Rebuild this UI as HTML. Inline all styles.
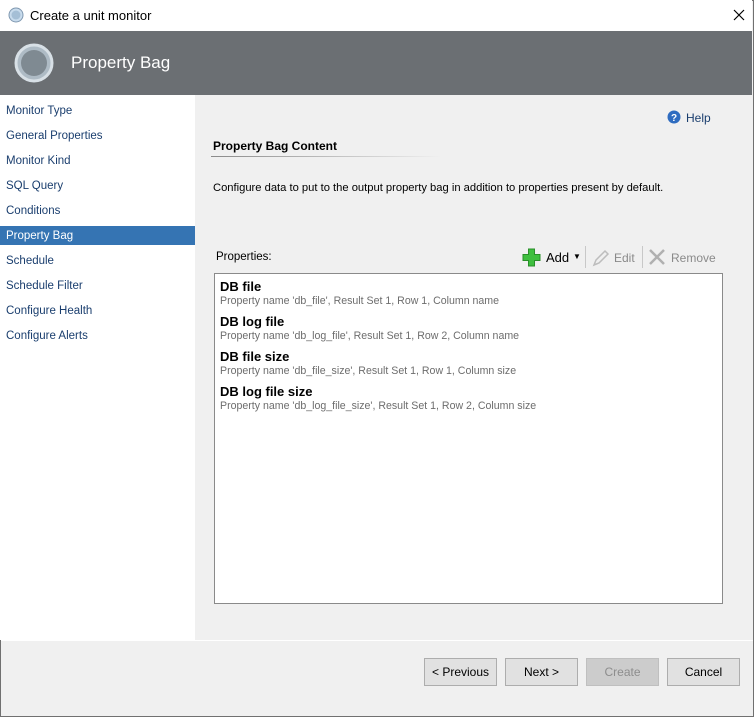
<!DOCTYPE html>
<html><head><style>
*{margin:0;padding:0;box-sizing:border-box}
body{width:754px;height:717px;overflow:hidden;font-family:"Liberation Sans",sans-serif;font-size:12px;background:#f0f0f0;position:relative}
.win{position:absolute;left:0;top:0;width:754px;height:717px;border:1px solid #707070}
.title{position:absolute;left:0;top:0;width:752px;height:31px;background:#fff}
.title span{position:absolute;left:30px;top:8px;font-size:13px;color:#000}
.hdr{position:absolute;left:0;top:31px;width:752px;height:64px;background:#6b6f73}
.hdr span{position:absolute;left:71px;top:22px;font-size:17px;color:#fff}
.nav{position:absolute;left:0;top:95px;width:195px;height:545px;background:#fff}
.nav div{position:absolute;left:0;width:195px;height:19px;padding-left:6px;line-height:21px;color:#1a3e6e;font-size:11.5px}
.nav .sel{background:#3574b3;color:#fff}
.abs{position:absolute}
.list{position:absolute;left:214px;top:273px;width:509px;height:331px;background:#fff;border:1px solid #8a8a8a}
.list b{position:absolute;left:5px;font-size:13px;color:#000}
.list i{position:absolute;left:5px;font-style:normal;font-size:10.6px;color:#6d6d6d}
.btn{position:absolute;top:658px;width:73px;height:28px;border:1px solid #adadad;background:#e1e1e1;text-align:center;line-height:26px;font-size:12px}
</style></head><body>
<div class="win"></div>
<div class="title"><svg class="abs" style="left:8px;top:7px" width="16" height="16"><circle cx="8" cy="8" r="7" fill="#c9dced" stroke="#7f98b0"/><circle cx="8" cy="8" r="4.5" fill="#a5bfd6"/></svg><span>Create a unit monitor</span>
<svg class="abs" style="left:733px;top:9px" width="12" height="12"><path d="M1 1L11 11M11 1L1 11" stroke="#000" stroke-width="1.2"/></svg></div>
<div class="hdr"><svg class="abs" style="left:14px;top:12px" width="40" height="40"><circle cx="20" cy="20" r="18" fill="#aebbc5" stroke="#d8e0e6" stroke-width="3"/><circle cx="20" cy="20" r="13" fill="#7f8a92"/></svg><span>Property Bag</span></div>
<div class="nav">
<div style="top:6px">Monitor Type</div>
<div style="top:31px">General Properties</div>
<div style="top:56px">Monitor Kind</div>
<div style="top:81px">SQL Query</div>
<div style="top:106px">Conditions</div>
<div class="sel" style="top:131px">Property Bag</div>
<div style="top:156px">Schedule</div>
<div style="top:181px">Schedule Filter</div>
<div style="top:206px">Configure Health</div>
<div style="top:231px">Configure Alerts</div>
</div>
<svg class="abs" style="left:667px;top:110px" width="14" height="14"><circle cx="7" cy="7" r="6.5" fill="#2f6cc0"/><text x="7" y="11" font-size="10" font-weight="bold" fill="#fff" text-anchor="middle" font-family="Liberation Sans">?</text></svg>
<div class="abs" style="left:686px;top:111px;font-size:12px;color:#1a3e6e">Help</div>
<div class="abs" style="left:213px;top:139px;font-size:12px;font-weight:bold">Property Bag Content</div>
<div class="abs" style="left:211px;top:156px;width:230px;height:1px;background:linear-gradient(90deg,#8a8a8a,#f0f0f0)"></div>
<div class="abs" style="left:213px;top:182px;font-size:11.2px">Configure data to put to the output property bag in addition to properties present by default.</div>
<div class="abs" style="left:216px;top:251px;font-size:11.5px">Properties:</div>
<svg class="abs" style="left:522px;top:248px" width="19" height="19"><path d="M6.5 1h6v5.5H18v6h-5.5V18h-6v-5.5H1v-6h5.5z" fill="#3fbf3f" stroke="#2a8f2a"/></svg>
<div class="abs" style="left:546px;top:250px;font-size:13px">Add</div>
<div class="abs" style="left:573px;top:252px;font-size:8px">▼</div>
<div class="abs" style="left:585px;top:246px;width:1px;height:22px;background:#c8c8c8"></div>
<svg class="abs" style="left:591px;top:248px" width="20" height="20"><path d="M3 17l2-5L14 3l3 3-9 9z" fill="none" stroke="#bdbdbd" stroke-width="1.5"/></svg>
<div class="abs" style="left:614px;top:251px;font-size:12px;color:#8a8a8a">Edit</div>
<div class="abs" style="left:642px;top:246px;width:1px;height:22px;background:#c8c8c8"></div>
<svg class="abs" style="left:648px;top:248px" width="18" height="18"><path d="M2 2L16 16M16 2L2 16" stroke="#b0b0b0" stroke-width="2.5"/></svg>
<div class="abs" style="left:671px;top:251px;font-size:12px;color:#8a8a8a">Remove</div>
<div class="list">
<b style="top:5px">DB file</b><i style="top:21px">Property name 'db_file', Result Set 1, Row 1, Column name</i>
<b style="top:40px">DB log file</b><i style="top:56px">Property name 'db_log_file', Result Set 1, Row 2, Column name</i>
<b style="top:75px">DB file size</b><i style="top:91px">Property name 'db_file_size', Result Set 1, Row 1, Column size</i>
<b style="top:110px">DB log file size</b><i style="top:126px">Property name 'db_log_file_size', Result Set 1, Row 2, Column size</i>
</div>
<div class="abs" style="left:1px;top:640px;width:752px;height:1px;background:#fff"></div>
<div class="btn" style="left:424px">&lt; Previous</div>
<div class="btn" style="left:505px">Next &gt;</div>
<div class="btn" style="left:586px;background:#cccccc;border-color:#bfbfbf;color:#8d8d8d">Create</div>
<div class="btn" style="left:667px">Cancel</div>
</body></html>
